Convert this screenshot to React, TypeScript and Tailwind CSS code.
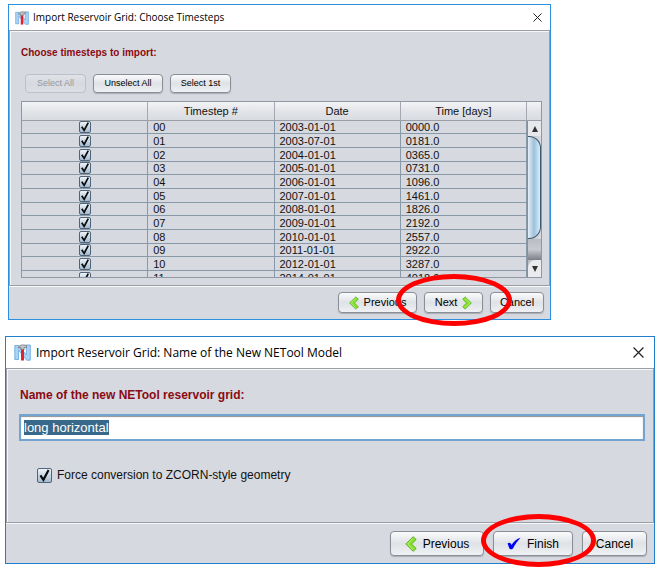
import { useEffect, useRef, type ReactNode } from "react";

const timesteps = [
  ["00", "2003-01-01", "0000.0"],
  ["01", "2003-07-01", "0181.0"],
  ["02", "2004-01-01", "0365.0"],
  ["03", "2005-01-01", "0731.0"],
  ["04", "2006-01-01", "1096.0"],
  ["05", "2007-01-01", "1461.0"],
  ["06", "2008-01-01", "1826.0"],
  ["07", "2009-01-01", "2192.0"],
  ["08", "2010-01-01", "2557.0"],
  ["09", "2011-01-01", "2922.0"],
  ["10", "2012-01-01", "3287.0"],
  ["11", "2014-01-01", "4018.0"],
];

function Logo({ className }: { className: string }) {
  return (
    <svg viewBox="0 0 17 17" className={className} aria-hidden="true">
      <path d="M.8 1.500h4L12.300 11V1h4v15.200h-3.600L4.600 6v9.500H.8z" fill="#a9d4f5" stroke="#5fa5dc" strokeWidth=".8" />
      <path d="M4 4C5.200 1 8 .4 12.500 1.400v2.200H10V6H7V3.600z" fill="#c3c6c8" stroke="#6f7477" strokeWidth=".8" />
      <path d="M7 5.500h3v11H7z" fill="#e3202b" />
    </svg>
  );
}

function CloseIcon({ className }: { className: string }) {
  return (
    <svg viewBox="0 0 10 10" className={className} aria-hidden="true">
      <path d="M.5.5l9 9M9.500.5l-9 9" stroke="#222" strokeWidth="1.100" fill="none" />
    </svg>
  );
}

function Chevron({ className, flip }: { className: string; flip?: boolean }) {
  return (
    <svg viewBox="0 0 12 16" className={className} aria-hidden="true">
      <g transform={flip ? "matrix(-1 0 0 1 12 0)" : undefined}>
        <path d="M8.200.7l3 2.800L6.500 8l4.700 4.500-3 2.800L.8 8z" fill="#86e02e" stroke="#62b022" strokeWidth="1" strokeLinejoin="round" />
        <path d="M8.200 2.400L2.600 8l5.600 5.500" stroke="#b4f070" strokeWidth="1" fill="none" />
      </g>
    </svg>
  );
}

function Check({ id, label, className }: { id: string; label?: string; className: string }) {
  return (
    <span className={`grid shrink-0 ${className}`}>
      <input
        id={id}
        type="checkbox"
        defaultChecked
        aria-label={label}
        className="peer col-start-1 row-start-1 size-full appearance-none rounded-xs border border-[#4f6478] bg-linear-to-b from-[#eef3f8] to-[#a4bbd0]"
      />
      <svg viewBox="0 0 14 14" className="pointer-events-none invisible col-start-1 row-start-1 size-full peer-checked:visible" aria-hidden="true">
        <path d="M3.200 6.800l2.800 4.200L10.800 1.800" fill="none" stroke="#0a0a0a" strokeWidth="2" />
      </svg>
    </span>
  );
}

function Button({ className, disabled, children }: { className: string; disabled?: boolean; children: ReactNode }) {
  return (
    <button
      type="button"
      disabled={disabled}
      className={`flex items-center justify-center rounded-sm border border-[#8a8e96] bg-linear-to-b from-[#fbfbfc] via-[#dfe2e6] to-[#eff1f4] text-black shadow-[0_1px_1px_#a9adb5] disabled:border-[#bcc0c7] disabled:from-[#dfe2e7] disabled:via-[#d6d9df] disabled:to-[#dcdfe4] disabled:text-[#9599a1] disabled:shadow-none ${className}`}
    >
      {children}
    </button>
  );
}

function TitleBar({ className, logo, close, children }: { className: string; logo: string; close: string; children: ReactNode }) {
  return (
    <header className={`flex items-center bg-white font-['Open_Sans','Noto_Sans',sans-serif] text-black ${className}`}>
      <Logo className={logo} />
      <h1 className="flex-1 whitespace-nowrap">{children}</h1>
      <button type="button" aria-label="Close">
        <CloseIcon className={close} />
      </button>
    </header>
  );
}

const panel = "border border-[#9c9ea6] shadow-[inset_1px_1px_#f6f7f9,0_1px_#f6f7f9]";

function Ring({ className }: { className: string }) {
  return <div className={`pointer-events-none absolute rounded-[50%] border-[#ff0000] ${className}`} />;
}

function Scrollbar() {
  return (
    <div className="flex flex-1 flex-col border-l border-[#7f92a2] bg-linear-to-r from-[#b9bcc2] to-[#dadce1]">
      <div className="flex h-[15px] items-center justify-center bg-[#e6e8ec]">
        <svg viewBox="0 0 6 6" className="size-[6px]" aria-hidden="true">
          <path d="M3 0l3 6H0z" fill="#333" />
        </svg>
      </div>
      <div className="h-[103px] rounded-r-xl border border-l-0 border-[#39566f] bg-linear-to-r from-[#e4eff8] via-[#9fbfda] to-[#d5f0fb]" />
      <div className="flex-1 bg-linear-to-b from-[#b9bcc2] via-[#c8cad0] to-[#7c7f86]" />
      <div className="flex h-[17px] items-center justify-center rounded-tl-lg bg-[#e9ebee]">
        <svg viewBox="0 0 6 6" className="size-[6px]" aria-hidden="true">
          <path d="M0 0h6L3 6z" fill="#333" />
        </svg>
      </div>
    </div>
  );
}

const headCell = "h-[19px] border-r border-b border-[#9a9ea6] border-r-[#a5a8b0] bg-linear-to-b from-[#f3f4f6] via-[#e2e4e8] to-[#d8dbe0] p-0 font-normal";
const cell = "border-r border-b border-[#8899a8] py-0 pr-0 pl-[5px]";

function TimestepTable() {
  return (
    <div className="mt-[8px] flex h-[177px] border border-[#8f98a3] text-[11px] leading-[12px]">
      <div className="min-w-0 flex-1 overflow-hidden">
        <table className="w-full table-fixed border-separate border-spacing-0 text-left">
          <thead>
            <tr className="text-center">
              <th className={headCell} aria-label="Import" />
              <th className={headCell}>Timestep #</th>
              <th className={headCell}>Date</th>
              <th className={headCell}>Time [days]</th>
            </tr>
          </thead>
          <tbody>
            {timesteps.map(([step, date, days], i) => (
              <tr key={step} className={i % 3 === 0 ? "h-[13px]" : "h-[14px]"}>
                <td className="border-r border-b border-[#8899a8] p-0">
                  <div className="flex justify-center">
                    <Check id={`step-${step}`} label={`Timestep ${step}`} className="size-[12px]" />
                  </div>
                </td>
                <td className={cell}>{step}</td>
                <td className={cell}>{date}</td>
                <td className={cell}>{days}</td>
              </tr>
            ))}
          </tbody>
        </table>
      </div>
      <div className="flex w-[14px] flex-col">
        <div className="h-[19px] border-b border-[#9a9ea6] bg-linear-to-b from-[#f3f4f6] via-[#e2e4e8] to-[#d8dbe0]" />
        <Scrollbar />
      </div>
    </div>
  );
}

export default function App() {
  const nameRef = useRef<HTMLInputElement>(null);
  useEffect(() => {
    nameRef.current?.focus();
    nameRef.current?.select();
  }, []);

  return (
    <main className="bg-white pt-[4px] pr-[6px] pb-[4px] pl-[5px] font-['Liberation_Sans',Arial,sans-serif] text-[#111]">
      <section className="ml-[3px] w-[543px] max-w-full border border-[#2d8fdd] bg-[#d6d9df]">
        <TitleBar className="h-[25px] pr-[8px] pl-[6px] text-[10px]" logo="mr-[4px] size-[14px]" close="size-[9px]">
          Import Reservoir Grid: Choose Timesteps
        </TitleBar>
        <div className={`pt-[14px] pr-[7px] pb-[7px] pl-[11px] ${panel}`}>
          <h2 className="text-[10px] leading-[16px] font-bold text-[#8b0a14]">Choose timesteps to import:</h2>
          <div className="mt-[13px] flex gap-[7px] pl-[4px] text-[9px]">
            <Button disabled className="h-[19px] w-[61px]">Select All</Button>
            <Button className="h-[19px] w-[70px]">Unselect All</Button>
            <Button className="h-[19px] w-[61px]">Select 1st</Button>
          </div>
          <TimestepTable />
        </div>
        <footer className="relative flex h-[33px] justify-end gap-[7px] pt-[6px] pr-[6px] text-[11px]">
          <Button className="h-[21px] w-[79px] gap-[5px]">
            <Chevron className="h-[14px] w-[10px]" />
            Previous
          </Button>
          <Button className="h-[21px] w-[59px] gap-[5px]">
            Next
            <Chevron flip className="h-[14px] w-[10px]" />
          </Button>
          <Button className="h-[21px] w-[54px]">Cancel</Button>
          <Ring className="-top-[12px] right-[38px] h-[52px] w-[116px] border-[5px]" />
        </footer>
      </section>

      <section className="mt-[16px] border border-[#1f7fcc] bg-[#d6d9df]">
        <TitleBar className="h-[31px] pr-[10px] pl-[8px] text-[12px]" logo="mr-[5px] size-[17px]" close="size-[11px]">
          Import Reservoir Grid: Name of the New NETool Model
        </TitleBar>
        <div className={`h-[155px] pt-[18px] pr-[8px] pl-[12px] ${panel}`}>
          <label htmlFor="grid-name" className="block pl-[1px] text-[12px] leading-[16px] font-bold text-[#8b0a14]">
            Name of the new NETool reservoir grid:
          </label>
          <input
            id="grid-name"
            ref={nameRef}
            type="text"
            defaultValue="long horizontal"
            className="mt-[11px] block h-[27px] w-full border-2 border-[#73a4d1] bg-white px-[3px] text-[13px] shadow-[inset_0_1px_1px_#8d8f94] outline-none selection:bg-[#39698a] selection:text-white"
          />
          <div className="mt-[27px] flex items-center gap-[5px] pl-[18px] text-[12px] leading-[15px]">
            <Check id="zcorn" className="size-[15px]" />
            <label htmlFor="zcorn">Force conversion to ZCORN-style geometry</label>
          </div>
        </div>
        <footer className="relative flex h-[40px] justify-end gap-[9px] pt-[8px] pr-[7px] text-[12px]">
          <Button className="h-[25px] w-[94px] gap-[6px]">
            <Chevron className="h-[16px] w-[12px]" />
            Previous
          </Button>
          <Button className="h-[25px] w-[80px] gap-[6px]">
            <svg viewBox="0 0 14 13" className="h-[13px] w-[14px]" aria-hidden="true">
              <path d="M.6 6.500C2 5.200 3.800 5.600 4.500 8 6.800 4.500 9.500 1.800 13.600.8 10.500 4 8 7.500 6 11.500 4.500 12.800 2.800 12.600 2.200 11z" fill="#0000f5" />
            </svg>
            Finish
          </Button>
          <Button className="h-[25px] w-[65px]">Cancel</Button>
          <Ring className="-top-[9px] right-[58px] h-[53px] w-[115px] border-[5px]" />
        </footer>
      </section>
    </main>
  );
}
